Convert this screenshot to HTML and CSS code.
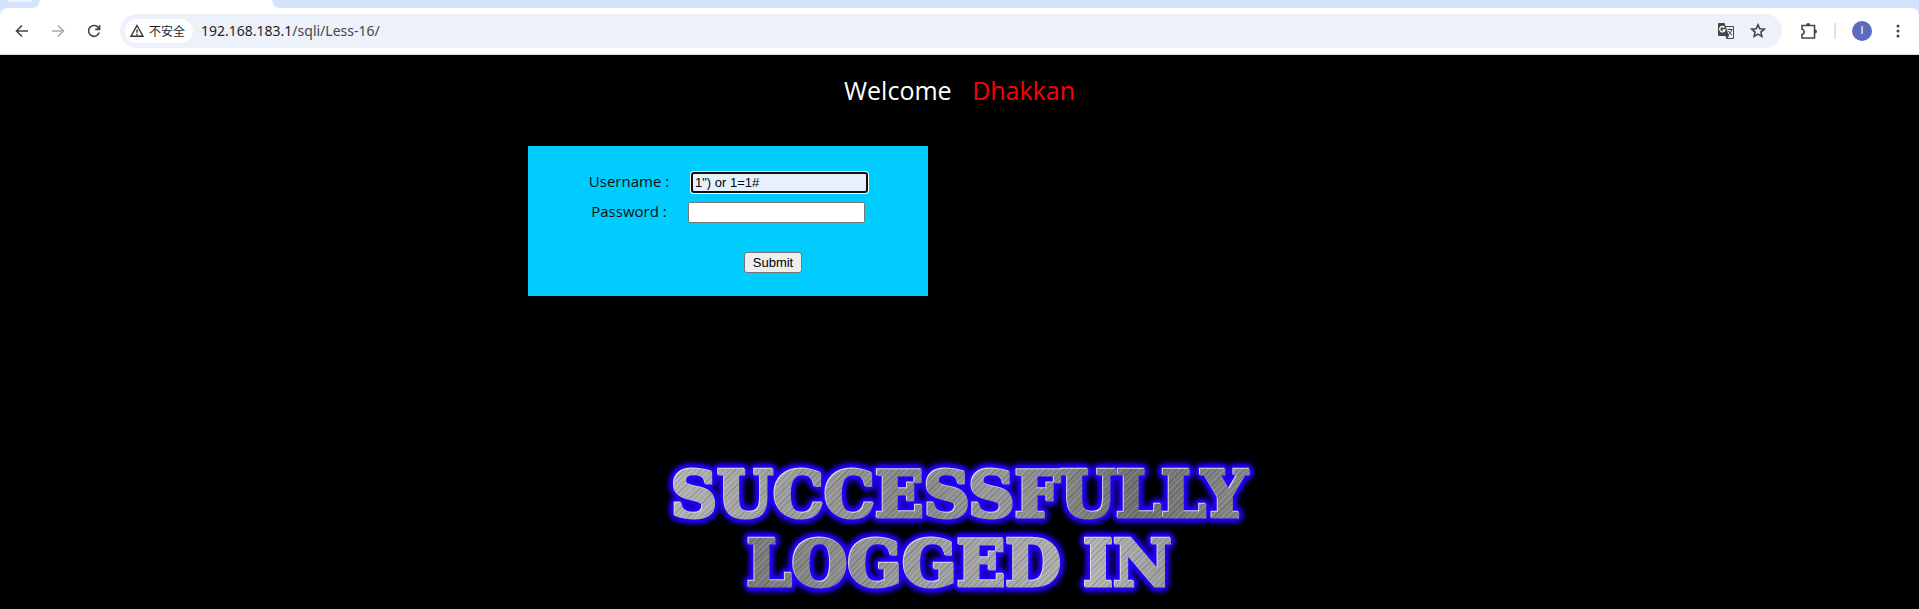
FILE: index.html
```html
<!DOCTYPE html>
<html lang="zh-CN">
<head>
<meta charset="utf-8">
<title>Less-16</title>
<link rel="stylesheet" href="styles.css">
</head>
<body>
<header class="browser">
  <div class="tabs">
    <div class="tabs-left"><span class="tab-pill"></span></div>
    <div class="tab-active"></div>
    <div class="tabs-right"></div>
  </div>
  <div class="toolbar">
    <nav class="nav">
      <button class="icon-btn" aria-label="Back"><svg viewBox="0 0 16 16"><path d="M14 8H3M8 2.500 2.500 8 8 13.500"/></svg></button>
      <button class="icon-btn muted" aria-label="Forward"><svg viewBox="0 0 16 16"><path d="M2 8h11M8 2.500 13.500 8 8 13.500"/></svg></button>
      <button class="icon-btn" aria-label="Reload"><svg viewBox="0 0 16 16"><path d="M13.200 9.500A5.400 5.400 0 1 1 12.600 5L13.400 6.200M13.600 2v4.400H9.200"/></svg></button>
    </nav>
    <div class="address">
      <button class="security"><svg viewBox="0 0 16 16"><path d="M8 2.500 14 13.200H2Z M8 6.500v3.300M8 10.800v1.400"/></svg>不安全</button>
      <span class="url">192.168.183.1<span class="path">/sqli/Less-16/</span></span>
      <button class="icon-btn translate" aria-label="Translate"><svg viewBox="0 0 18 18"><path class="solid" d="M2 1h5.500l1 3H16a1 1 0 0 1 1 1v11a1 1 0 0 1-1 1H9.500l-1-3H2a1 1 0 0 1-1-1V2a1 1 0 0 1 1-1Z"/><path class="paper" d="M9 5h7v11h-5.500l1.500-2-3-9Z"/><path class="g" d="M7.500 5.500A2.700 2.700 0 1 0 8 8H5.500"/><path class="glyph" d="M10.500 7.500h5M13 6.500v1M14.500 8c-.5 2-1.500 3.500-3.500 5M11.500 9c.8 1.800 2 3 3.500 4"/></svg></button>
      <button class="icon-btn star" aria-label="Bookmark"><svg viewBox="0 0 16 16"><path d="m8 1.800 1.800 4 4.400.4-3.300 2.900 1 4.300L8 11.100l-3.900 2.300 1-4.300-3.300-2.900 4.400-.4Z"/></svg></button>
    </div>
    <button class="icon-btn puzzle" aria-label="Extensions"><svg viewBox="0 0 18 18"><path d="M2 3.500h12.500v12.500H2v-3.500a2.700 2.700 0 0 0 0-5.300Z"/><path class="solid" d="M6.200 3a2 2 0 0 1 4 0ZM15 7.500a2 2 0 0 1 0 4Z"/></svg></button>
    <span class="divider"></span>
    <button class="avatar">I</button>
    <button class="icon-btn menu" aria-label="Menu"><svg viewBox="0 0 16 16"><circle cx="8" cy="3" r="1.500"/><circle cx="8" cy="8" r="1.500"/><circle cx="8" cy="13" r="1.500"/></svg></button>
  </div>
</header>
<main class="page">
  <h1 class="welcome">Welcome <span class="name">Dhakkan</span></h1>
  <form class="login">
    <div class="row"><label for="uname">Username :</label><input class="field focused" id="uname" type="text" value="1&quot;) or 1=1#"></div>
    <div class="row"><label for="passwd">Password :</label><input class="field" id="passwd" type="text"></div>
    <button class="submit" type="button">Submit</button>
  </form>
  <p class="banner"><span class="metal first">SUCCESSFULLY</span><span class="metal second">LOGGED IN</span></p>
</main>
</body>
</html>
```
FILE: styles.css
```css
* { box-sizing: border-box; }
body { margin: 0; min-height: 100vh; background: #000; font-family: "Open Sans", "Noto Sans CJK SC", sans-serif; }
button { font: inherit; border: 0; padding: 0; background: none; color: inherit; }

.browser { background: #d3e3fd; }
.tabs { display: flex; height: 8px; background: #fff; }
.tabs-left { width: 40px; background: #d3e3fd; border-bottom-right-radius: 8px; padding-left: 8px; }
.tab-pill { display: block; width: 24px; height: 2px; background: #edf2fc; border-radius: 0 0 8px 8px; }
.tab-active { width: 232px; background: #fff; }
.tabs-right { flex: 1; background: #d3e3fd; border-bottom-left-radius: 8px; }
.toolbar { display: flex; align-items: center; height: 47px; padding: 0 13px 1px 14px; background: #fff; border-bottom: 1px solid #dadce0; border-radius: 8px 8px 0 0; }
.nav { display: flex; gap: 20px; margin-right: 18px; }
.icon-btn { display: flex; width: 16px; height: 16px; color: #444746; }
.icon-btn svg { width: 100%; height: 100%; fill: none; stroke: currentColor; stroke-width: 1.6; }
.muted { color: #ababab; }
.address { display: flex; flex: 1; align-items: center; height: 34px; padding: 0 16px 0 5px; border-radius: 17px; background: #ecf1fa; }
.security { display: flex; align-items: center; gap: 4px; height: 24px; padding: 0 8px 0 4px; border-radius: 12px; background: #fff; color: #1f1f1f; font-size: 12px; }
.security svg { width: 16px; height: 16px; fill: none; stroke: #333; stroke-width: 1.4; }
.url { flex: 1; margin-left: 8px; color: #1f1f1f; font-family: "Noto Sans", sans-serif; font-size: 14px; line-height: 20px; }
.path { color: #474747; }
.translate { width: 18px; height: 18px; }
.translate .solid, .puzzle .solid { fill: currentColor; stroke: none; }
.translate .paper { fill: #ecf1fa; stroke: none; }
.translate .g { stroke: #fff; stroke-width: 1.3; }
.translate .glyph { stroke-width: 1; }
.star { margin-left: 15px; }
.puzzle { width: 18px; height: 18px; margin-left: 18px; }
.divider { width: 2px; height: 16px; margin-left: 16px; background: #d3e3fd; }
.avatar { width: 20px; height: 20px; margin: 0 18px 0 16px; border-radius: 50%; background: #5c6bc0; color: #fff; font: 11px/20px Roboto, sans-serif; }
.menu svg { fill: currentColor; stroke: none; }

.page { display: flex; flex-direction: column; align-items: center; padding-top: 17px; }
.welcome { margin: 0; color: #fff; font-size: 25px; font-weight: 400; line-height: 36px; }
.name { margin-left: 14px; color: #f00; }
.login { display: flex; flex-direction: column; width: 400px; height: 150px; margin: 38px 463px 0 0; padding: 21px 60px 0; background: #0cf; color: #111; }
.row { display: flex; align-items: center; height: 30px; font-size: 15px; }
.row label { flex: none; width: 82px; margin-right: 18px; padding-bottom: 2px; text-align: center; }
.field { flex: none; width: 177px; height: 21px; padding: 1px 3px; border: 1px solid #767676; border-radius: 2px; background: #fff; color: #000; font: 13px "Liberation Sans", sans-serif; outline: 0; }
.focused { margin-left: 3px; padding: 0 2px; border: 2px solid #101010; border-radius: 3px; background: #e8f0fe; box-shadow: 0 0 0 1px #fff; }
.submit { width: 58px; height: 21px; margin: 25px 0 0 156px; border: 1px solid #767676; border-radius: 3px; background: #efefef; color: #000; font: 13px "Liberation Sans", sans-serif; }
.banner { display: flex; flex-direction: column; align-items: center; margin: 164px 0 0; font: bold 64px/69px "DejaVu Serif", serif; filter: drop-shadow(-1px -1px 0 #ddd) drop-shadow(0 0 2px #20f) drop-shadow(0 0 2px #20f) drop-shadow(0 0 2px #20f) drop-shadow(0 0 2px #20f); }
.metal { padding: 0 4px; color: transparent; -webkit-text-stroke: 3px transparent; background-clip: text; -webkit-background-clip: text; }
.first { background-image: repeating-linear-gradient(135deg, #fff2 0 1px, #0000 1px 3px, #0002 3px 4px), linear-gradient(90deg, #b4b4b4, #999 25%, #858585 42%, #9b9b9b 55%, #707070 80%, #888); }
.second { background-image: repeating-linear-gradient(135deg, #fff2 0 1px, #0000 1px 3px, #0002 3px 4px), linear-gradient(90deg, #777, #999 35%, #aaa 65%, #b4b4b4 80%, #999); }
```
